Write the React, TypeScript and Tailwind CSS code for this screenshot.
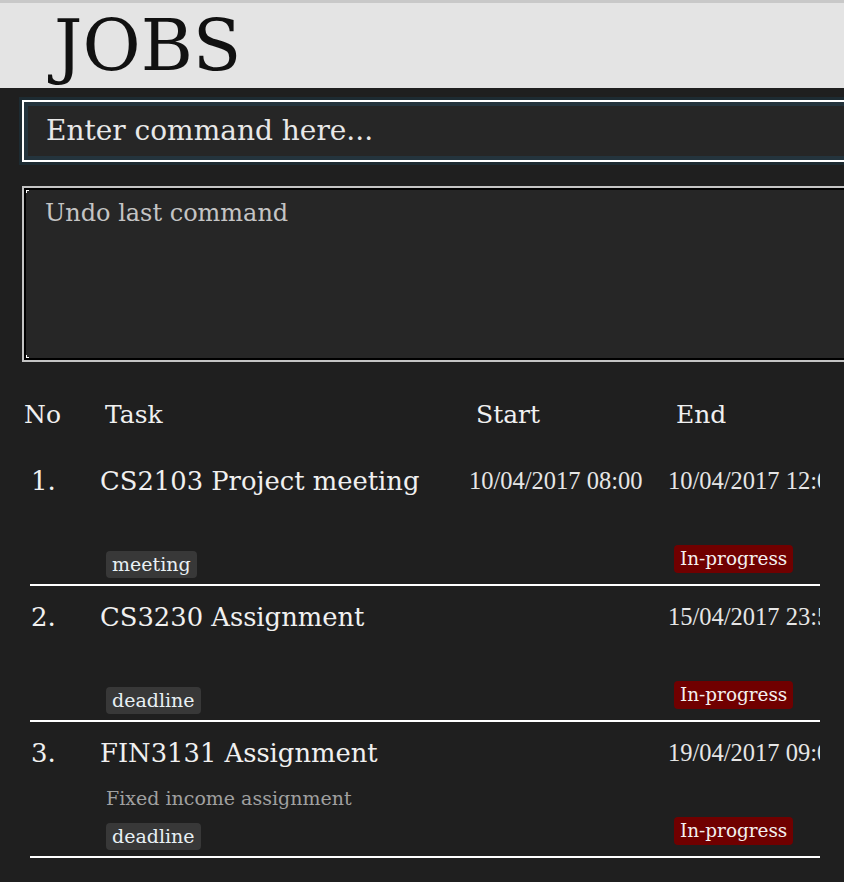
import React from "react";

const serif = { fontFamily: '"DejaVu Serif", serif' };

type Task = {
  no: string;
  title: string;
  start?: string;
  end: string;
  desc?: string;
  tag: string;
};

const tasks: Task[] = [
  { no: "1.", title: "CS2103 Project meeting", start: "10/04/2017 08:00", end: "10/04/2017 12:00", tag: "meeting" },
  { no: "2.", title: "CS3230 Assignment", end: "15/04/2017 23:59", tag: "deadline" },
  { no: "3.", title: "FIN3131 Assignment", end: "19/04/2017 09:00", desc: "Fixed income assignment", tag: "deadline" },
];

function Row({ t }: { t: Task }) {
  return (
    <div className="ml-[30px] w-[790px] h-[136px] border-b-2 border-white flex flex-col">
      <div className="h-[62px] flex items-center whitespace-nowrap">
        <div className="w-[70px] text-[26px] text-[#f0f0f0] pl-[1px]">{t.no}</div>
        <div className="w-[369px] text-[25.8px] text-[#f0f0f0]">{t.title}</div>
        <div className="w-[199px] text-[24.5px] text-[#e6e6e6] font-['Liberation_Serif',serif]">{t.start ?? ""}</div>
        <div className="flex-1 overflow-hidden text-[24.5px] text-[#e6e6e6] font-['Liberation_Serif',serif]">{t.end}</div>
      </div>
      <div className="h-[28px] pl-[76px] flex items-center text-[19px] text-[#a0a0a0] whitespace-nowrap">
        {t.desc ?? ""}
      </div>
      <div className="flex">
        <div className="w-[644px] pl-[76px] pt-[11px]">
          <span className="inline-block h-[27px] leading-[27px] px-[6px] rounded-[4px] bg-[#383838] text-[19px] text-[#e8f0f4]">
            {t.tag}
          </span>
        </div>
        <div className="pt-[5px]">
          <span className="inline-block h-[28px] leading-[28px] px-[6px] rounded-[4px] bg-[#700000] text-[18.4px] text-[#f4f0f0]">
            In-progress
          </span>
        </div>
      </div>
    </div>
  );
}

export default function App() {
  return (
    <div className="w-[844px] h-[882px] bg-[#1f1f1f] overflow-hidden" style={serif}>
      <div className="h-[3px] bg-[#c8c8c8]" />
      <div className="h-[85px] bg-[#e4e4e4] flex items-center pl-[54px]">
        <span className="text-[71px] leading-none text-[#111]">JOBS</span>
      </div>
      <div className="pt-[12px] pl-[22px]">
        <div className="w-[840px] h-[62px] border-2 border-white bg-[#262626] shadow-[0_0_0_3px_#1d2b32,inset_0_0_0_4px_#24343d] flex items-center pl-[22px]">
          <span className="text-[28px] text-[#e8e8e8] whitespace-nowrap">Enter command here...</span>
        </div>
      </div>
      <div className="pt-[24px] pl-[22px]">
        <div className="relative w-[840px] h-[176px] border-2 border-[#c4c4c4] bg-[#262626] shadow-[inset_0_0_0_2px_#000] pl-[21px] pt-[8px]">
          <span className="absolute left-[2px] top-[2px] w-[3px] h-[3px] border-l border-t border-white" />
          <span className="absolute left-[2px] bottom-[2px] w-[3px] h-[3px] border-l border-b border-white" />
          <div className="text-[24px] leading-[34px] text-[#c4c4c4] whitespace-nowrap">Undo last command</div>
        </div>
      </div>
      <div className="h-[88px] pt-[38px] flex whitespace-nowrap text-[25px] leading-[30px] text-[#f0f0f0]">
        <div className="w-[105px] pl-[24px]">No</div>
        <div className="w-[371px]">Task</div>
        <div className="w-[200px]">Start</div>
        <div>End</div>
      </div>
      {tasks.map((t) => (
        <Row key={t.no} t={t} />
      ))}
    </div>
  );
}
